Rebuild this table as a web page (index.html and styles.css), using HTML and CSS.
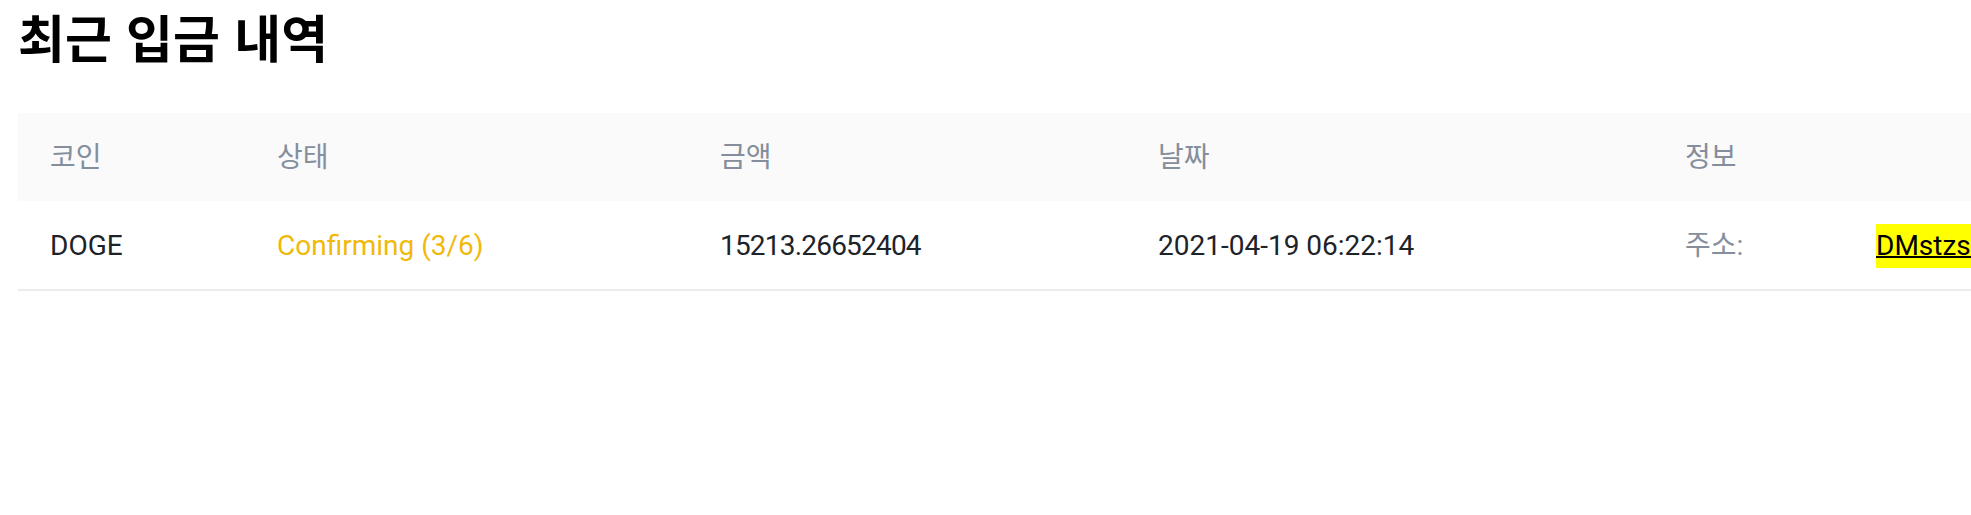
FILE: index.html
```html
<!DOCTYPE html>
<html lang="ko">
<head>
<meta charset="utf-8">
<title>최근 입금 내역</title>
<link rel="stylesheet" href="styles.css">
</head>
<body>
<main class="page">
  <h1 class="title">최근 입금 내역</h1>
  <div class="table">
    <div class="row head">
      <div class="cell">코인</div>
      <div class="cell">상태</div>
      <div class="cell">금액</div>
      <div class="cell">날짜</div>
      <div class="cell">정보</div>
    </div>
    <div class="row body">
      <div class="cell">DOGE</div>
      <div class="cell status">Confirming (3/6)</div>
      <div class="cell amount">15213.26652404</div>
      <div class="cell date">2021-04-19 06:22:14</div>
      <div class="cell info">
        <span class="info-label">주소:</span>
        <a class="addr" href="#">DMstzsQw8vYXmR5C1gTkPqN3hJbF2LdUeZ</a>
      </div>
    </div>
  </div>
</main>
</body>
</html>
```

FILE: styles.css
```css
html, body {
  margin: 0;
  padding: 0;
  background: #ffffff;
  overflow: hidden;
}

body {
  font-family: Roboto, "Noto Sans CJK KR", sans-serif;
  color: #1e2329;
}

.page {
  padding: 0 0 0 18px;
  width: max-content;
}

.title {
  margin: 0 0 41px 0;
  font-family: "Noto Sans CJK KR", "Noto Sans", sans-serif;
  font-size: 51px;
  line-height: 72px;
  font-weight: 700;
  color: #000000;
}

.table {
  width: 2400px;
}

.row {
  display: grid;
  grid-template-columns: 227px 443px 438px 527px 765px;
  align-items: center;
}

.row.head {
  height: 88px;
  background: #fafafa;
}

.row.body {
  height: 88px;
  border-bottom: 2px solid #eaecef;
}

.cell {
  padding-left: 32px;
  font-size: 28px;
  line-height: 40px;
  white-space: nowrap;
}

.row.head .cell {
  padding-top: 1px;
  color: #848e9c;
}

.row.body .cell {
  padding-top: 2px;
}

.status {
  color: #f0b90b;
}

.amount {
  letter-spacing: -0.8px;
}

.info {
  display: flex;
  align-items: center;
}

.info-label {
  flex: 0 0 191px;
  color: #848e9c;
}

.addr {
  color: #000000;
  background: #ffff00;
  text-decoration: underline;
  text-decoration-thickness: 2px;
  padding: 2px 0;
}
```
